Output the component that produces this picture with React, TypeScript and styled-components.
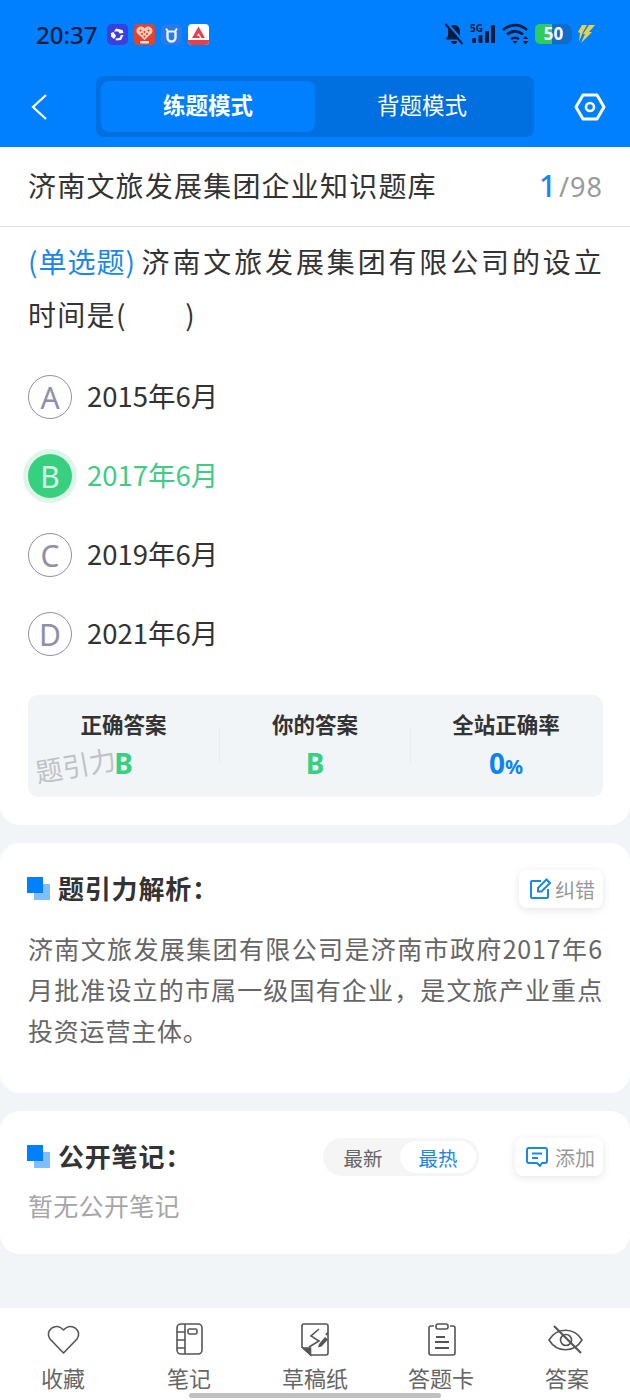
import React from "react";
import styled, { createGlobalStyle } from "styled-components";

const Global = createGlobalStyle`
  html, body { margin: 0; padding: 0; background: #f2f5f8; }
  body { font-family: "Noto Sans CJK SC", "Noto Sans", sans-serif; }
  * { box-sizing: border-box; }
`;

const Page = styled.div`
  position: relative;
  width: 630px;
  height: 1400px;
  overflow: hidden;
  display: flex;
  flex-direction: column;
  background: #f2f5f8;
`;
const Header = styled.header`
  height: 147px;
  background: #0080ff;
  display: flex;
  flex-direction: column;
  flex: none;
`;
const StatusBar = styled.div`
  height: 68px;
  padding: 0 35px 0 36px;
  display: flex;
  align-items: center;
  justify-content: space-between;
`;
const StatusGroup = styled.div`
  display: flex;
  align-items: center;
  gap: 6px;
`;
const Clock = styled.span`
  font-family: "Noto Sans", sans-serif;
  font-size: 24px;
  font-weight: 500;
  color: #0b1c3d;
  margin-right: 4px;
`;
const Nav = styled.div`
  height: 79px;
  padding: 8px 24px 10px 30px;
  display: flex;
  align-items: center;
`;
const ModeTabs = styled.div`
  width: 438px;
  height: 61px;
  margin-left: 48px;
  margin-right: auto;
  background: #006fdf;
  border-radius: 8px;
  padding: 5px;
  display: grid;
  grid-template-columns: 214px 1fr;
`;
const ModeTab = styled.div<{ $active?: boolean }>`
  display: flex;
  align-items: center;
  justify-content: center;
  padding-bottom: 5px;
  border-radius: 8px;
  font-size: 22.500px;
  color: #fff;
  font-weight: ${(p) => (p.$active ? 700 : 400)};
  background: ${(p) => (p.$active ? "#0080ff" : "transparent")};
`;
const Main = styled.section`
  background: #fff;
  border-radius: 0 0 20px 20px;
  height: 678px;
  flex: none;
`;
const TitleRow = styled.div`
  height: 80px;
  padding: 0 27px 3px 28px;
  border-bottom: 1px solid #e3e3e3;
  display: flex;
  align-items: center;
  justify-content: space-between;
`;
const ExamTitle = styled.div`
  font-size: 28px;
  letter-spacing: 1.2px;
  color: #333;
`;
const Counter = styled.div`
  font-family: "Noto Sans", sans-serif;
  font-size: 27px;
  letter-spacing: 1px;
  color: #9a9a9a;
  display: flex;
  align-items: baseline;
  gap: 2px;
`;
const CounterNow = styled.span`
  font-size: 30px;
  font-weight: 500;
  color: #1b87e6;
`;
const Question = styled.div`
  padding: 8px 27px 0 28px;
  font-size: 28px;
  line-height: 53px;
  letter-spacing: 1.3px;
  color: #333;
  text-align: justify;
`;
const QuestionType = styled.span`
  display: inline-block;
  width: 107px;
  margin-right: 5px;
  letter-spacing: 1px;
  white-space: nowrap;
  color: #1b87e6;
`;
const Options = styled.div`
  margin-top: 34px;
  padding: 0 28px;
  display: flex;
  flex-direction: column;
  gap: 35px;
`;
const Option = styled.div`
  display: flex;
  align-items: center;
  gap: 15px;
  height: 44px;
`;
const Badge = styled.div<{ $picked?: boolean }>`
  width: 44px;
  height: 44px;
  border-radius: 50%;
  flex: none;
  display: flex;
  align-items: center;
  justify-content: center;
  font-family: "Noto Sans", sans-serif;
  font-size: 30px;
  color: ${(p) => (p.$picked ? "#d8f7e6" : "#8d90a8")};
  background: ${(p) => (p.$picked ? "#37d07f" : "#fff")};
  border: ${(p) => (p.$picked ? "none" : "1px solid #8d90a8")};
  box-shadow: ${(p) => (p.$picked ? "0 0 0 5px #def6e9" : "none")};
`;
const OptionText = styled.span<{ $picked?: boolean }>`
  font-size: 27.500px;
  padding-bottom: 4px;
  color: ${(p) => (p.$picked ? "#41cc85" : "#333")};
`;
const Stats = styled.div`
  position: relative;
  margin: 39px 27px 0 28px;
  height: 102px;
  padding-right: 2px;
  background: #f2f5f8;
  border-radius: 10px;
  display: grid;
  grid-template-columns: repeat(3, 1fr);
  align-items: center;
`;
const Stat = styled.div<{ $divider?: boolean }>`
  height: 36px;
  position: relative;
  display: flex;
  flex-direction: column;
  align-items: center;
  justify-content: center;
  border-left: ${(p) => (p.$divider ? "1px solid #e9edf1" : "none")};
`;
const StatInner = styled.div`
  display: flex;
  flex-direction: column;
  align-items: center;
  gap: 6px;
  margin-top: -3px;
`;
const StatLabel = styled.div`
  font-size: 21.500px;
  font-weight: 700;
  line-height: 30px;
  color: #333;
`;
const StatValue = styled.div<{ $blue?: boolean }>`
  font-family: "Noto Sans", sans-serif;
  font-size: 28px;
  font-weight: 700;
  line-height: 36px;
  height: 36px;
  color: ${(p) => (p.$blue ? "#0a84f5" : "#37d07f")};
`;
const Pct = styled.span`
  font-size: 20px;
  line-height: 1;
`;
const Watermark = styled.div`
  position: absolute;
  left: 7px;
  top: 50px;
  font-size: 27px;
  color: #bfc2c5;
  transform: rotate(-10deg);
  pointer-events: none;
`;
const Card = styled.section<{ $h: number }>`
  margin-top: 18px;
  height: ${(p) => p.$h}px;
  background: #fff;
  border-radius: 20px;
  padding: 27px 27px 0 28px;
  flex: none;
`;
const CardHead = styled.div`
  display: flex;
  align-items: center;
  height: 38px;
`;
const Mark = styled.div`
  width: 23px;
  height: 23px;
  margin: -1px 8px 0 -1px;
  flex: none;
  background: linear-gradient(#0080ff, #0080ff) 0 0 / 16px 16px no-repeat,
    linear-gradient(#7fbfff, #7fbfff) 7px 7px / 16px 16px no-repeat;
`;
const CardTitle = styled.h2`
  margin: 0;
  padding-bottom: 3px;
  font-size: 26px;
  font-weight: 700;
  letter-spacing: 0.800px;
  color: #333;
  flex: 1;
`;
const SmallBtn = styled.div<{ $gap: number }>`
  height: 38px;
  padding: 0 8px 0 10px;
  border-radius: 8px;
  background: #fff;
  box-shadow: 0 2px 8px rgba(0, 0, 0, 0.1);
  display: flex;
  align-items: center;
  gap: ${(p) => p.$gap}px;
  font-size: 20px;
  color: #999;
`;
const Body = styled.p`
  margin: 20px 0 0;
  font-size: 25px;
  line-height: 41px;
  letter-spacing: 0.800px;
  color: #666;
  text-align: justify;
`;
const Sorter = styled.div`
  width: 156px;
  height: 38px;
  margin-right: 36px;
  border-radius: 19px;
  background: #f5f5f5;
  padding: 3px;
  display: grid;
  grid-template-columns: 74px 1fr;
  font-size: 19.500px;
`;
const SortItem = styled.div<{ $active?: boolean }>`
  display: flex;
  align-items: center;
  justify-content: center;
  border-radius: 16px;
  background: ${(p) => (p.$active ? "#fff" : "transparent")};
  color: ${(p) => (p.$active ? "#1b87e6" : "#666")};
`;
const Empty = styled.div`
  margin-top: 9px;
  font-size: 25px;
  letter-spacing: 0.300px;
  line-height: 40px;
  color: #a6a6a6;
`;
const BottomBar = styled.nav`
  margin-top: auto;
  height: 92px;
  background: #fff;
  display: grid;
  grid-template-columns: repeat(5, 1fr);
  flex: none;
`;
const BarItem = styled.div`
  display: flex;
  flex-direction: column;
  align-items: center;
  padding-top: 15px;
  font-size: 22px;
  line-height: 30px;
  color: #666;
  gap: 5px;
`;
const Home = styled.div`
  position: absolute;
  left: 189px;
  top: 1393px;
  width: 252px;
  height: 5px;
  border-radius: 3px;
  background: #c0c0c0;
`;
const Battery = styled.div`
  width: 37px;
  height: 20px;
  border-radius: 5px 7px 7px 5px;
  background: linear-gradient(90deg, #2ecc5e 0 17px, #0d6dc8 17px 100%);
  font-family: "Noto Sans", sans-serif;
  font-size: 17px;
  font-weight: 700;
  line-height: 20px;
  text-align: center;
  color: #fff;
`;
const SignalBox = styled.div`
  position: relative;
  width: 26px;
  height: 20px;
`;
const NetLabel = styled.span`
  position: absolute;
  left: 0;
  top: -1px;
  font-family: "Noto Sans", sans-serif;
  font-size: 10px;
  font-weight: 700;
  line-height: 10px;
  color: #0b1c3d;
`;

const Bell = () => (
  <svg width="20" height="22" viewBox="0 0 20 22">
    <path d="M10 2c3.500 0 6 2.500 6 6.500V13l2.500 3.500H3L1.500 16 4 13V8.500C4 4.500 6.500 2 10 2z" fill="#0b1c3d" />
    <path d="M7 18h6a3 3 0 0 1-6 0z" fill="#0b1c3d" />
    <path d="M2.500 0 20 20" stroke="#0080ff" strokeWidth="3" />
    <path d="M1.500 1 18.500 21" stroke="#0b1c3d" strokeWidth="2" />
  </svg>
);
const Signal = () => (
  <SignalBox>
    <NetLabel>5G</NetLabel>
    <svg width="26" height="20" viewBox="0 0 26 20">
      <rect x="2" y="14" width="4" height="5" rx="1" fill="#0b1c3d" />
      <rect x="8.500" y="11" width="4" height="8" rx="1" fill="#0b1c3d" />
      <rect x="15" y="7" width="4" height="12" rx="1" fill="#0b1c3d" />
      <rect x="21" y="1" width="4" height="18" rx="1" fill="#0b1c3d" />
    </svg>
  </SignalBox>
);
const Wifi = () => (
  <svg width="27" height="22" viewBox="0 0 27 22" fill="none" stroke="#0b1c3d" strokeWidth="2.800">
    <path d="M1 7c7-6.500 17-6.500 24 0" />
    <path d="M5 11.500c5-4 11-4 16 0" />
    <path d="M9 16c3-2 5-2 8 0" stroke="#0b1c3d" strokeWidth="2.400" />
    <path d="M10.500 18h5l-2.500 3z" fill="#0b1c3d" stroke="none" />
    <path d="M20.500 16h6l-3-3zM20.500 18h6l-3 3.500z" fill="#0b1c3d" stroke="none" />
  </svg>
);
const Bolt = () => (
  <svg width="17" height="18" viewBox="0 0 17 18">
    <path d="M4 0h5L5 7 1 17l1-9-2-1z" fill="#e4d24e" />
    <path d="M11 0h6l-6 7h3L3 18l4-9H5z" fill="#e4d24e" />
  </svg>
);
const AppA = () => (
  <svg width="21" height="21" viewBox="0 0 21 21">
    <rect width="21" height="21" rx="5" fill="#3a3fe0" />
    <path d="M9 4.500l6.500 1.500 1 3-4 .5-1-2H7zM4 9l2.500-1 2.500 4-2 3L4 12.500zM16.500 11l-2.500 5-5 .5-.5-2 4-.5 1.500-3z" fill="#fff" />
  </svg>
);
const AppB = () => (
  <svg width="21" height="21" viewBox="0 0 21 21">
    <rect width="21" height="21" rx="4" fill="#e0432f" />
    <path d="M10.500 16 3 9C.500 4 7.500 0 10.500 4.500 13.500 0 20.500 4 18 9z" fill="#f7cdb9" />
    <g fill="#d93a2a">
      <circle cx="6.500" cy="6.500" r="1" />
      <circle cx="10.500" cy="8" r="1" />
      <circle cx="14.500" cy="6.500" r="1" />
      <circle cx="8" cy="10" r="1" />
      <circle cx="13" cy="10" r="1" />
      <circle cx="10.500" cy="12.500" r="1" />
    </g>
    <rect x="6" y="17" width="9" height="2.500" rx="1" fill="#fbe6da" />
  </svg>
);
const AppC = () => (
  <svg width="21" height="21" viewBox="0 0 21 21" fill="none">
    <rect width="21" height="21" rx="5" fill="#2b7ae8" />
    <path d="M6.500 7.500v6a4 4 0 0 0 8 0v-6" stroke="#e8f2ff" strokeWidth="2.400" />
    <path d="M5 4.500 7 7.500h7l2-3" stroke="#e8f2ff" strokeWidth="2" />
  </svg>
);
const AppD = () => (
  <svg width="21" height="21" viewBox="0 0 21 21">
    <rect width="21" height="21" rx="4" fill="#fff" />
    <path d="M10.500 2.500 17 14h-3.500l-3-5-1.500 3h2l1 2H4z" fill="#e8404a" />
    <path d="M0 16h21v1a4 4 0 0 1-4 4H4a4 4 0 0 1-4-4z" fill="#e8404a" />
  </svg>
);
const Back = () => (
  <svg width="18" height="28" viewBox="0 0 18 28" fill="none" stroke="#fff" strokeWidth="2.200">
    <path d="M16 2 3 14l13 12" />
  </svg>
);
const Gear = () => (
  <svg width="32" height="28" viewBox="0 0 32 28" fill="none" stroke="#fff" strokeWidth="3">
    <path d="M9 2h14l7 12-7 12H9L2 14z" strokeLinejoin="round" />
    <circle cx="16" cy="14" r="4" strokeWidth="2.600" />
  </svg>
);
const EditIcon = () => (
  <svg width="22" height="22" viewBox="0 0 22 22" fill="none" stroke="#1b87e6" strokeWidth="2">
    <path d="M12 3H3a1 1 0 0 0-1 1v15a1 1 0 0 0 1 1h15a1 1 0 0 0 1-1v-8" />
    <path d="M9 10v3.500h3.500L21 5l-3.500-3.500z" />
  </svg>
);
const ChatIcon = () => (
  <svg width="24" height="22" viewBox="0 0 24 22" fill="none" stroke="#1b87e6" strokeWidth="2">
    <path d="M4 2h16a2 2 0 0 1 2 2v11a2 2 0 0 1-2 2h-3l-2 3-3-3H4a2 2 0 0 1-2-2V4a2 2 0 0 1 2-2z" strokeLinejoin="round" />
    <path d="M7 7.500h10M7 12h6" />
  </svg>
);

const icon = { width: 40, height: 34, fill: "none", stroke: "#555", strokeWidth: 1.600, viewBox: "0 0 40 34" };
const Heart = () => (
  <svg {...icon}>
    <path d="M20.500 30 7 16C1 8 13-2 20.500 7 28-2 40 8 34 16z" strokeLinejoin="round" />
  </svg>
);
const Notebook = () => (
  <svg {...icon}>
    <rect x="8" y="1" width="25" height="30" rx="4" />
    <path d="M16 1v30M8 9h8M8 17h8M8 25h8" />
    <rect x="19" y="6" width="9" height="5" rx="1.500" />
  </svg>
);
const Draft = () => (
  <svg {...icon}>
    <path d="M10 1h21a2 2 0 0 1 2 2v27a2 2 0 0 1-2 2H16l-9-8V3a2 2 0 0 1 2-2z" strokeLinejoin="round" />
    <path d="M8 25h7.500v7z" fill="#555" />
    <path d="M24 6l-8 7 8 5-10 6" />
    <path d="M24 21l6-7 3 2.500-6.500 7-3.500 1z" fill="#555" stroke="none" />
    <path d="M31 12l2-2.500" strokeWidth="2" />
  </svg>
);
const Sheet = () => (
  <svg {...icon}>
    <path d="M13 3H10a2 2 0 0 0-2 2v25a2 2 0 0 0 2 2h22a2 2 0 0 0 2-2V5a2 2 0 0 0-2-2h-3" />
    <rect x="15" y="1" width="12" height="5" rx="2" />
    <path d="M15 14h9M14 19h14M14 25h14" strokeWidth="2" />
  </svg>
);
const EyeOff = () => (
  <svg {...icon}>
    <path d="M2 17C10 4 27 4 35 17 27 30 10 30 2 17z" />
    <circle cx="19" cy="17" r="5.500" />
    <path d="M7 3l27 27" strokeWidth="2.200" />
  </svg>
);

export default function App() {
  return (
    <Page>
      <Global />
      <Header>
        <StatusBar>
          <StatusGroup>
            <Clock>20:37</Clock>
            <AppA />
            <AppB />
            <AppC />
            <AppD />
          </StatusGroup>
          <StatusGroup>
            <Bell />
            <Signal />
            <Wifi />
            <Battery>50</Battery>
            <Bolt />
          </StatusGroup>
        </StatusBar>
        <Nav>
          <Back />
          <ModeTabs>
            <ModeTab $active>练题模式</ModeTab>
            <ModeTab>背题模式</ModeTab>
          </ModeTabs>
          <Gear />
        </Nav>
      </Header>
      <Main>
        <TitleRow>
          <ExamTitle>济南文旅发展集团企业知识题库</ExamTitle>
          <Counter>
            <CounterNow>1</CounterNow>/98
          </Counter>
        </TitleRow>
        <Question>
          <QuestionType>(单选题)</QuestionType>济南文旅发展集团有限公司的设立时间是(　　)
        </Question>
        <Options>
          <Option>
            <Badge>A</Badge>
            <OptionText>2015年6月</OptionText>
          </Option>
          <Option>
            <Badge $picked>B</Badge>
            <OptionText $picked>2017年6月</OptionText>
          </Option>
          <Option>
            <Badge>C</Badge>
            <OptionText>2019年6月</OptionText>
          </Option>
          <Option>
            <Badge>D</Badge>
            <OptionText>2021年6月</OptionText>
          </Option>
        </Options>
        <Stats>
          <Stat>
            <StatInner>
              <StatLabel>正确答案</StatLabel>
              <StatValue>B</StatValue>
            </StatInner>
          </Stat>
          <Stat $divider>
            <StatInner>
              <StatLabel>你的答案</StatLabel>
              <StatValue>B</StatValue>
            </StatInner>
          </Stat>
          <Stat $divider>
            <StatInner>
              <StatLabel>全站正确率</StatLabel>
              <StatValue $blue>
                0<Pct>%</Pct>
              </StatValue>
            </StatInner>
          </Stat>
          <Watermark>题引力</Watermark>
        </Stats>
      </Main>
      <Card $h={250}>
        <CardHead>
          <Mark />
          <CardTitle>题引力解析：</CardTitle>
          <SmallBtn $gap={4}>
            <EditIcon />
            纠错
          </SmallBtn>
        </CardHead>
        <Body>济南文旅发展集团有限公司是济南市政府2017年6月批准设立的市属一级国有企业，是文旅产业重点投资运营主体。</Body>
      </Card>
      <Card $h={143}>
        <CardHead>
          <Mark />
          <CardTitle>公开笔记：</CardTitle>
          <Sorter>
            <SortItem>最新</SortItem>
            <SortItem $active>最热</SortItem>
          </Sorter>
          <SmallBtn $gap={6}>
            <ChatIcon />
            添加
          </SmallBtn>
        </CardHead>
        <Empty>暂无公开笔记</Empty>
      </Card>
      <BottomBar>
        <BarItem>
          <Heart />
          收藏
        </BarItem>
        <BarItem>
          <Notebook />
          笔记
        </BarItem>
        <BarItem>
          <Draft />
          草稿纸
        </BarItem>
        <BarItem>
          <Sheet />
          答题卡
        </BarItem>
        <BarItem>
          <EyeOff />
          答案
        </BarItem>
      </BottomBar>
      <Home />
    </Page>
  );
}
